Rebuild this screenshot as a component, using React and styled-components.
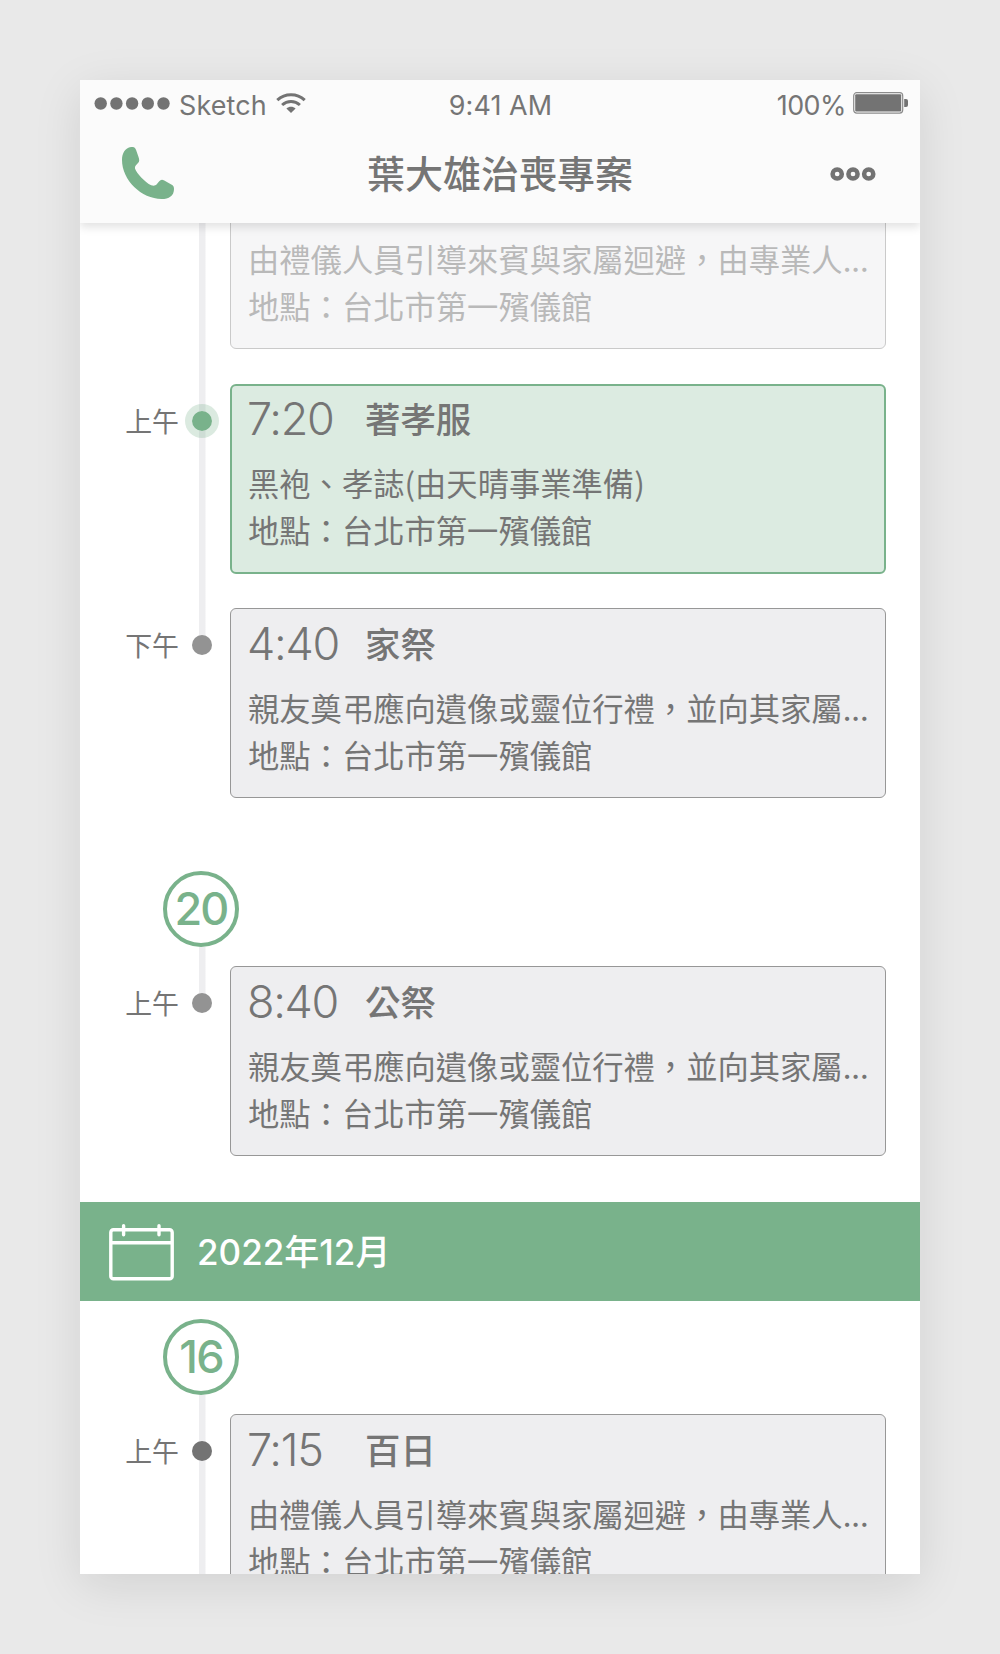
import React from 'react';
import styled, { createGlobalStyle } from 'styled-components';

const GlobalStyle = createGlobalStyle`
  * {
    box-sizing: border-box;
  }
  body {
    margin: 0;
    background: #e9e9e9;
    color: #757575;
    font-family: Inter, 'Noto Sans CJK TC', sans-serif;
  }
`;

const Page = styled.div`
  height: 1654px;
  padding: 80px;
  background: #e9e9e9;
  overflow: hidden;
`;

const Phone = styled.div`
  display: flex;
  flex-direction: column;
  width: 840px;
  height: 1494px;
  background: #ffffff;
  box-shadow: 0 11px 45px rgba(0, 0, 0, 0.1);
`;

const Header = styled.header`
  position: relative;
  z-index: 1;
  flex: none;
  height: 143px;
  background: #fbfbfb;
  box-shadow: 0 4px 9px rgba(0, 0, 0, 0.12);
  clip-path: inset(0 0 -20px 0);
`;

const StatusBar = styled.div`
  display: grid;
  grid-template-columns: 1fr auto 1fr;
  align-items: center;
  height: 45px;
  padding: 5px 11px 0 14px;
  font-size: 26.9px;
  line-height: 40px;
`;

const StatusGroup = styled.div`
  display: flex;
  align-items: center;
  justify-content: ${({ $end }) => ($end ? 'flex-end' : 'flex-start')};
  svg {
    display: block;
    margin-bottom: 4px;
  }
`;

const Carrier = styled.span`
  margin: 0 9px 0 9px;
  letter-spacing: 0.15px;
`;

const Clock = styled.span`
  margin-right: 2px;
  letter-spacing: 0.1px;
`;

const Percent = styled.span`
  margin-right: 7px;
  letter-spacing: -0.5px;
`;

const NavBar = styled.div`
  display: grid;
  grid-template-columns: 1fr auto 1fr;
  align-items: center;
  height: 98px;
  padding: 0 44px 0 42px;
`;

const NavTitle = styled.h1`
  margin: 0 0 0 2px;
  font-size: 38px;
  font-weight: 500;
  line-height: 50px;
`;

const IconButton = styled.button`
  display: flex;
  justify-self: ${({ $end }) => ($end ? 'end' : 'start')};
  margin-bottom: ${({ $green }) => ($green ? '2px' : 0)};
  padding: 0;
  border: 0;
  background: none;
  color: ${({ $green }) => ($green ? '#79b28b' : '#737373')};
`;

const Timeline = styled.main`
  flex: 1;
  min-height: 0;
  overflow: hidden;
`;

/* The list is scrolled so the first entry starts under the header */
const Scrolled = styled.div`
  margin-top: -64.4px;
`;

const Entry = styled.section`
  display: grid;
  grid-template-columns: 105px 34px 656px;
  padding-bottom: ${({ $gap }) => $gap}px;
  margin-bottom: ${({ $after }) => $after || 0}px;
`;

const Period = styled.span`
  padding: 18px 6px 0 0;
  font-size: 26.9px;
  line-height: 40px;
  text-align: right;
  white-space: nowrap;
`;

const Rail = styled.div`
  display: flex;
  justify-content: center;
  margin-top: ${({ $up }) => -($up || 0)}px;
  margin-bottom: ${({ $down }) => -($down || 0)}px;
  padding-top: ${({ $up }) => 20 + ($up || 0)}px;
  background: linear-gradient(#eeeef0, #eeeef0) no-repeat center top;
  background-size: 6.5px ${({ $ends, $up }) => ($ends ? `${38 + ($up || 0)}px` : '100%')};
`;

const dotColors = {
  past: '#939393',
  next: '#737373',
  active: '#79b28b',
};

const Dot = styled.span`
  width: 34px;
  height: 34px;
  border: 7px solid ${({ $state }) => ($state === 'active' ? 'rgba(121, 178, 139, 0.27)' : 'transparent')};
  border-radius: 50%;
  background: ${({ $state }) => dotColors[$state]};
  background-clip: padding-box;
`;

const Card = styled.article`
  height: 190px;
  margin-left: 11px;
  width: 656px;
  padding: ${({ $active }) => ($active ? '13.8px 16px' : '15px 17px')};
  border: ${({ $active }) => ($active ? '2.2px solid #79b28b' : '1px solid #979797')};
  border-radius: 6px;
  background: ${({ $active }) => ($active ? '#dcebe1' : '#eeeef0')};
  opacity: ${({ $faded }) => ($faded ? 0.5 : 1)};
`;

const CardHead = styled.div`
  display: flex;
  align-items: center;
  height: 44px;
  margin-bottom: 16px;
`;

const Time = styled.span`
  width: 118px;
  margin-left: -1px;
  padding-bottom: 4px;
  font-size: 45px;
  font-weight: 300;
  letter-spacing: -1.3px;
  line-height: 44px;
`;

const CardTitle = styled.h2`
  margin: 0;
  font-size: 35.4px;
  font-weight: 500;
  line-height: 44px;
`;

const Line = styled.p`
  margin: 0;
  font-family: 'Noto Sans CJK TC', sans-serif;
  font-size: 31.3px;
  line-height: 47px;
  white-space: nowrap;
`;

const DayBadge = styled.div`
  display: flex;
  align-items: center;
  justify-content: center;
  width: 76px;
  height: 76px;
  margin: 0 0 19px 83px;
  border: 4.4px solid #79b28b;
  border-radius: 50%;
  color: #79b28b;
  font-size: 45px;
  font-weight: 500;
  letter-spacing: -1.8px;
  line-height: 60px;
`;

const MonthBar = styled.div`
  display: flex;
  align-items: center;
  gap: 23px;
  height: 98.5px;
  margin-bottom: 18px;
  padding-left: 29px;
  background: #79b28b;
  color: #ffffff;
  font-size: 35px;
  font-weight: 500;
  svg {
    margin-top: 3px;
  }
`;

const Month = styled.span`
  padding-bottom: 3px;
`;

const PhoneIcon = () => (
  <svg width="52" height="52" viewBox="157 231 155 155" fill="currentColor">
    <path d="M184 231C166 233 157 250 157 270C157 330 215 386 275 386C297 386 312 376 312 356C312 350 310 346 304 343L283 331C277 327 272 328 268 333L260 343C256 347 250 347 244 345C225 337 200 308 196 296C195 291 196 288 200 284L206 277C210 272 208 266 206 260L199 240C197 234 193 230 184 231Z" />
  </svg>
);

const MoreIcon = () => (
  <svg width="46" height="14" viewBox="0 0 46 14" fill="none" stroke="currentColor" strokeWidth="4.5">
    <circle cx="7.2" cy="7" r="4.6" />
    <circle cx="23" cy="7" r="4.6" />
    <circle cx="38.7" cy="7" r="4.6" />
  </svg>
);

const SignalIcon = () => (
  <svg width="76" height="13" viewBox="0 0 76 13" fill="#737373">
    {[0, 1, 2, 3, 4].map((i) => (
      <circle key={i} cx={6.7 + i * 15.7} cy="6.5" r="6.2" />
    ))}
  </svg>
);

const WifiIcon = () => (
  <svg width="30" height="21" viewBox="0 0 30 21" fill="none" stroke="#737373">
    <path d="M1.3 7.2C9 0 21 0 28.7 7.2" strokeWidth="3.1" />
    <path d="M6.1 12C11.2 7.3 18.8 7.3 23.9 12" strokeWidth="3" />
    <path d="M15 20L10.4 15.5C13 13.1 17 13.1 19.6 15.5Z" fill="#737373" stroke="none" />
  </svg>
);

const BatteryIcon = () => (
  <svg width="56" height="22" viewBox="0 0 56 22">
    <rect x="0.7" y="0.7" width="49" height="20.4" rx="3" fill="none" stroke="#8c8c8c" strokeWidth="1.2" />
    <rect x="2.2" y="2.3" width="46" height="17.3" rx="1" fill="#737373" />
    <path d="M51.2 7H53Q55 7 55 9V13Q55 15 53 15H51.2Z" fill="#737373" />
  </svg>
);

const CalendarIcon = () => (
  <svg width="65" height="57" viewBox="0 0 65 57" fill="none" stroke="#ffffff" strokeWidth="3.4">
    <rect x="1.8" y="5.8" width="61.4" height="49" rx="2.6" />
    <path d="M2 18.8H63" />
    <path d="M14.6 1.8V10.8M50 1.8V10.8" strokeLinecap="round" />
  </svg>
);

const PLACE = '地點：台北市第一殯儀館';
const GUIDE = '由禮儀人員引導來賓與家屬迴避，由專業人...';
const MOURN = '親友奠弔應向遺像或靈位行禮，並向其家屬...';

const entries = {
  earlier: { note: GUIDE, state: 'past', faded: true, gap: 35 },
  dressing: { period: '上午', time: '7:20', title: '著孝服', note: '黑袍、孝誌(由天晴事業準備)', state: 'active', gap: 34 },
  family: { period: '下午', time: '4:40', title: '家祭', note: MOURN, state: 'past', ends: true, gap: 0, after: 73 },
  public: { period: '上午', time: '8:40', title: '公祭', note: MOURN, state: 'past', ends: true, up: 19, gap: 0, after: 46.5 },
  hundred: { period: '上午', time: '7:15', title: '百日', note: GUIDE, state: 'next', up: 19, gap: 34 },
};

const TimelineEntry = ({ entry }) => {
  const active = entry.state === 'active';

  return (
    <Entry $gap={entry.gap} $after={entry.after}>
      <Period>{entry.period}</Period>
      <Rail $up={entry.up} $down={entry.ends ? 0 : entry.gap} $ends={entry.ends}>
        <Dot $state={entry.state} />
      </Rail>
      <Card $active={active} $faded={entry.faded}>
        <CardHead>
          {entry.time && <Time>{entry.time}</Time>}
          {entry.title && <CardTitle>{entry.title}</CardTitle>}
        </CardHead>
        <Line>{entry.note}</Line>
        <Line>{PLACE}</Line>
      </Card>
    </Entry>
  );
};

const App = () => (
  <Page lang="zh-Hant">
    <GlobalStyle />
    <Phone>
      <Header>
        <StatusBar>
          <StatusGroup>
            <SignalIcon />
            <Carrier>Sketch</Carrier>
            <WifiIcon />
          </StatusGroup>
          <Clock>9:41 AM</Clock>
          <StatusGroup $end>
            <Percent>100%</Percent>
            <BatteryIcon />
          </StatusGroup>
        </StatusBar>
        <NavBar>
          <IconButton $green aria-label="撥打電話">
            <PhoneIcon />
          </IconButton>
          <NavTitle>葉大雄治喪專案</NavTitle>
          <IconButton $end aria-label="更多">
            <MoreIcon />
          </IconButton>
        </NavBar>
      </Header>
      <Timeline>
        <Scrolled>
          <TimelineEntry entry={entries.earlier} />
          <TimelineEntry entry={entries.dressing} />
          <TimelineEntry entry={entries.family} />
          <DayBadge>20</DayBadge>
          <TimelineEntry entry={entries.public} />
          <MonthBar>
            <CalendarIcon />
            <Month>2022年12月</Month>
          </MonthBar>
          <DayBadge>16</DayBadge>
          <TimelineEntry entry={entries.hundred} />
        </Scrolled>
      </Timeline>
    </Phone>
  </Page>
);

export default App;
